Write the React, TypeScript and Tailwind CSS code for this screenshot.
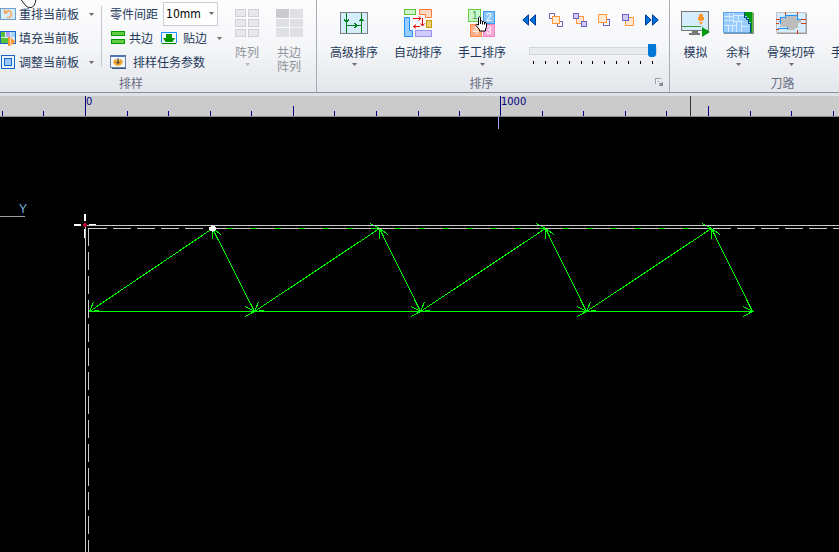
import type { ReactNode } from 'react'

export default function App() {
    return (
        <div className="relative flex min-h-screen flex-col overflow-hidden bg-black font-['Noto_Sans_CJK_SC',sans-serif] text-[12px] text-[#1e395b]">
            <Ribbon />
            <Ruler />
            <NestCanvas />
            <CursorTail className="absolute top-0 left-5" />
        </div>
    )
}

/* ── Ribbon ── */
function Ribbon() {
    return (
        <header className="flex shrink-0 overflow-hidden border-b border-[#8b9097] bg-linear-to-b from-[#fdfdfe] via-[#f5f6f8] to-[#e3e6eb]">
            <Group title="排样" className="-ml-[54px] w-[371px] pl-[54px]" captionClass="-ml-[54px]">
                <div className="w-[101px] pt-[2px]">
                    <RowButton icon={<RedoIcon />} label="重排当前板" menu />
                    <RowButton icon={<FillIcon />} label="填充当前板" />
                    <RowButton icon={<AdjustIcon />} label="调整当前板" menu />
                </div>
                <div className="mt-[6px] h-[61px] w-px bg-[#c3c6cb]" />
                <div className="w-[124px] pt-[2px] pl-2">
                    <div className="flex h-6 items-center gap-[5px]">
                        <label htmlFor="gap" className="whitespace-nowrap">零件间距</label>
                        <div className="relative">
                            <select
                                id="gap"
                                className="block h-6 w-[55px] appearance-none border border-[#c8ccd1] bg-white pl-[2px] font-['DejaVu_Sans_Condensed',sans-serif] text-[12px] text-black"
                            >
                                <option>10mm</option>
                            </select>
                            <Caret className="pointer-events-none absolute top-[10px] right-1" />
                        </div>
                    </div>
                    <div className="flex h-6 items-center">
                        <button className="flex items-center gap-[3px] whitespace-nowrap"><CommonEdgeIcon />共边</button>
                        <button className="ml-2 flex items-center gap-[6px] whitespace-nowrap">
                            <SnapEdgeIcon />贴边<Caret className="ml-1" />
                        </button>
                    </div>
                    <button className="flex h-6 items-center gap-[7px] whitespace-nowrap"><TaskIcon />排样任务参数</button>
                </div>
                <BigButton icon={<ArrayIcon />} label="阵列" menu disabled className="w-[42px]" />
                <BigButton icon={<EdgeArrayIcon />} label="共边阵列" disabled className="w-[42px]" labelClass="w-6" />
            </Group>

            <Group title="排序" className="w-[353px] pl-[5px]" captionClass="pr-7" launcher>
                <BigButton icon={<AdvancedSortIcon />} label="高级排序" menu className="w-16" />
                <BigButton icon={<AutoSortIcon />} label="自动排序" className="w-16" />
                <BigButton icon={<ManualSortIcon />} label="手工排序" menu className="w-16" />
                <div className="ml-[3px] pt-2">
                    <div className="flex">
                        <NavButton name="最前"><RewindIcon /></NavButton>
                        <NavButton name="上一个" className="ml-[3px]"><StepIcon kind="back" /></NavButton>
                        <NavButton name="下一个"><StepIcon kind="forward" /></NavButton>
                        <NavButton name="置前"><StepIcon kind="first" /></NavButton>
                        <NavButton name="置后"><StepIcon kind="last" /></NavButton>
                        <NavButton name="最后"><ForwardIcon /></NavButton>
                    </div>
                    <input
                        type="range"
                        aria-label="排序进度"
                        min={0}
                        max={10}
                        defaultValue={10}
                        className="mt-3 ml-3 block h-[14px] w-32 appearance-none bg-transparent [&::-webkit-slider-runnable-track]:h-2 [&::-webkit-slider-runnable-track]:border [&::-webkit-slider-runnable-track]:border-[#d2d5d9] [&::-webkit-slider-runnable-track]:bg-[#e9ebee] [&::-webkit-slider-thumb]:-mt-1 [&::-webkit-slider-thumb]:h-[13px] [&::-webkit-slider-thumb]:w-2 [&::-webkit-slider-thumb]:appearance-none [&::-webkit-slider-thumb]:rounded-b-[3px] [&::-webkit-slider-thumb]:bg-[#0078d7]"
                    />
                    <div className="mt-[3px] ml-4 flex w-[120px] justify-between">
                        {Array.from({ length: 11 }, (_, i) => (
                            <span key={i} className="h-[3px] w-px bg-black" />
                        ))}
                    </div>
                </div>
            </Group>

            <Group title="刀路" className="w-[222px] pl-1">
                <BigButton icon={<SimulateIcon />} label="模拟" className="w-[43px]" />
                <BigButton icon={<RemnantIcon />} label="余料" menu className="w-[42px]" />
                <BigButton icon={<SkeletonIcon />} label="骨架切碎" menu className="w-16" />
                <BigButton icon={null} label="手" className="ml-2 w-3" />
            </Group>
        </header>
    )
}

type GroupProps = {
    title: string
    children: ReactNode
    className?: string
    captionClass?: string
    launcher?: boolean
}

function Group({ title, children, className = '', captionClass = '', launcher }: GroupProps) {
    return (
        <section className={`shrink-0 border-r border-[#a9adb3] ${className}`}>
            <div className="flex h-[74px]">{children}</div>
            <div className={`relative h-[18px] text-center leading-[18px] text-[#6a6d82] ${captionClass}`}>
                {title}
                {launcher && (
                    <button aria-label="更多" className="absolute top-1 right-[6px]">
                        <svg width="8" height="8" fill="none" stroke="#9aa0aa" shapeRendering="crispEdges">
                            <path d="M0.500 6V0.500H6" />
                            <path d="M3 3.500h1M4 5.500h4M5 6.500h3M4 7.500h4M7.500 4v2" stroke="#858b95" />
                        </svg>
                    </button>
                )}
            </div>
        </section>
    )
}

function RowButton({ icon, label, menu }: { icon: ReactNode; label: string; menu?: boolean }) {
    return (
        <button className="flex h-6 w-full items-center gap-[3px] whitespace-nowrap">
            {icon}
            {label}
            {menu && <Caret className="ml-[7px]" />}
        </button>
    )
}

type BigButtonProps = {
    icon: ReactNode
    label: string
    menu?: boolean
    disabled?: boolean
    className?: string
    labelClass?: string
}

function BigButton({ icon, label, menu, disabled, className = '', labelClass = 'whitespace-nowrap' }: BigButtonProps) {
    return (
        <button disabled={disabled} className={`flex shrink-0 flex-col items-center pt-[9px] disabled:text-[#8f9299] ${className}`}>
            <span className="flex h-7 items-center">{icon}</span>
            <span className={`mt-2 leading-[14px] ${labelClass}`}>{label}</span>
            {menu && <Caret className={disabled ? 'mt-1 opacity-40' : 'mt-1'} />}
        </button>
    )
}

function NavButton({ name, children, className = '' }: { name: string; children: ReactNode; className?: string }) {
    return (
        <button aria-label={name} className={`flex h-6 w-6 items-center justify-center ${className}`}>
            {children}
        </button>
    )
}

function Caret({ className = '' }: { className?: string }) {
    return (
        <svg width="5" height="3" className={`shrink-0 ${className}`} fill="#6b6b6b">
            <path d="M0 0h5L2.500 3z" />
        </svg>
    )
}

/* ── Ruler ── */
const TICKS = [2, 43, 127, 168, 210, 251, 334, 376, 418, 459, 542, 583, 625, 666, 750, 791, 833]

function Ruler() {
    return (
        <div className="shrink-0 border-t-3 border-b border-t-[#dfe3e8] border-b-[#8c8c8c] bg-[#cbcbcb]">
            <svg className="block h-5 w-full" shapeRendering="crispEdges" fill="#000080">
                {TICKS.map((x) => (
                    <rect key={x} x={x} y="15" width="1" height="5" />
                ))}
                <rect x="293" y="10" width="1" height="10" />
                <rect x="708" y="10" width="1" height="10" />
                <rect x="85" y="0" width="1" height="20" />
                <rect x="500" y="0" width="1" height="20" />
                <rect x="690" y="0" width="1" height="20" fill="#303030" />
                <g className="font-['DejaVu_Sans_Condensed',sans-serif] text-[11px]">
                    <text x="86" y="9">0</text>
                    <text x="501" y="9">1000</text>
                </g>
            </svg>
        </div>
    )
}

/* ── Nesting canvas ── */
const TOP = [212, 379, 545, 711]
const BOTTOM = [254, 420, 586, 752]

function NestCanvas() {
    return (
        <svg className="block min-h-[240px] w-full flex-1" shapeRendering="crispEdges" fill="none">
            <rect x="498" y="0" width="1" height="12" fill="#a0a0ff" />
            <text x="19" y="96" fill="#79aede" className="font-['Liberation_Sans',sans-serif] text-[12px]">Y</text>
            <path d="M0 99.500h25" stroke="#a0a0a0" />

            {/* cut path */}
            <g stroke="#00ff00">
                <path d="M212 111.500H711M89 194.500H752" />
                <path d="M89.500 194.500L212.500 111.500L254.500 194.500L379.500 111.500L420.500 194.500L545.500 111.500L586.500 194.500L711.500 111.500L752.500 194.500" />
                {TOP.map((x) => (
                    <path key={x} transform={`translate(${x} 111)`} d="M9 6.500L0.500 0.500L0.500 10.500" />
                ))}
                {TOP.slice(1).map((x) => (
                    <path key={x} transform={`translate(${x} 111)`} d="M-9 -4.500L0.500 0.500L-9 6.500M-7 5.500L0.500 0.500" />
                ))}
                {BOTTOM.map((x) => (
                    <path key={x} transform={`translate(${x} 194)`} d="M-9 -4.500L0.500 0.500L-9 5.500" />
                ))}
                {[89, ...BOTTOM.slice(0, 3)].map((x) => (
                    <path key={x} transform={`translate(${x} 194)`} d="M4.500 -9L0.500 0.500L10.500 -0.500" />
                ))}
            </g>

            {/* sheet border and margin */}
            <g stroke="#c8c8c8">
                <line x1="85" y1="108.500" x2="100%" y2="108.500" />
                <line x1="85.500" y1="108" x2="85.500" y2="100%" />
                <line x1="89" y1="111.500" x2="100%" y2="111.500" strokeDasharray="18 6" />
                <line x1="88.500" y1="111" x2="88.500" y2="100%" strokeDasharray="18 6" />
            </g>

            {/* start point and origin */}
            <path d="M209 110h2v-1h1v-1h1v1h2v1h1v3h-1v1h-2v1h-1v-1h-2v-1h-1z" fill="#fff" />
            <path d="M84 97h2v7h-2zM74 107h7v2h-7zM89 107h7v1h-7zM84 112h1v9h-1z" fill="#fff" />
            <path d="M84 106h2v1h1v2h-1v1h-2v-1h-1v-2h1z" fill="#c00030" />
        </svg>
    )
}

/* ── Small icons ── */
function RedoIcon() {
    return (
        <svg width="16" height="16" className="shrink-0" fill="none">
            <rect x=".5" y="2.500" width="15" height="11" fill="#d4ecfb" stroke="#6f9ec4" />
            <path d="M4.500 3.500v3.500h4M5 6.500Q8 3.500 10.500 5.500Q12.500 9 9.500 11.500H6.500" stroke="#ff9a3c" strokeWidth="1.200" />
        </svg>
    )
}

function FillIcon() {
    return (
        <svg width="16" height="16" className="shrink-0">
            <rect x=".5" y="1.500" width="15" height="12" fill="#d9eefc" stroke="#1a66c4" />
            <path d="M1 2h4v5H1zM1 8h8v5H1z" fill="#5bc236" />
            <path d="M6 2h4v5H6z" fill="#b0a0fa" />
            <path d="M11 2h4v5h-4z" fill="#a8d4f8" />
            <path d="M8 7h2l5.500 4.500L10 16H8z" fill="#ff9630" />
            <path d="M10.500 8v7" stroke="#ffe0b8" />
        </svg>
    )
}

function AdjustIcon() {
    return (
        <svg width="16" height="16" className="shrink-0" shapeRendering="crispEdges">
            <rect x="1.500" y="1.500" width="13" height="13" fill="#eaf4fe" stroke="#1466cc" />
            <rect x="4.500" y="4.500" width="7" height="7" fill="#9cc8fa" stroke="#1466cc" />
        </svg>
    )
}

function CommonEdgeIcon() {
    return (
        <svg width="16" height="16" className="shrink-0" fill="#66cc44" stroke="#009900" shapeRendering="crispEdges">
            <rect x="1.500" y="1.500" width="13" height="4" />
            <rect x="1.500" y="9.500" width="13" height="4" />
        </svg>
    )
}

function SnapEdgeIcon() {
    return (
        <svg width="16" height="14" className="shrink-0">
            <path d="M0.500 12V1.500h15V12" fill="#f4faff" stroke="#1e90ff" />
            <path d="M5 3h6v4h3l-2.500 4h-7L2 7h3z" fill="#009a00" />
            <path d="M1 12.500h14" stroke="#008000" />
        </svg>
    )
}

function TaskIcon() {
    return (
        <svg width="16" height="14" className="shrink-0">
            <rect x=".5" y=".5" width="15" height="12" fill="#f3f6fa" stroke="#6b85a8" />
            <path d="M0 0h16v2H0z" fill="#5179b0" />
            <path d="M3 7l2-3 2 1 1-1 1 1 2-1 2 3-2 3-3 1-3-1z" fill="#eba52a" />
            <path d="M7.500 3h1v5h-1zM6 7h4l-2 2z" fill="#3d3d3d" />
            <path d="M2 13.500h14" stroke="#375681" />
        </svg>
    )
}

/* ── Large icons ── */
function ArrayIcon() {
    return (
        <svg width="24" height="28" fill="#e6e8eb" stroke="#cfd1d5" shapeRendering="crispEdges">
            {[0, 10, 20].map((y) => (
                <g key={y}>
                    <rect x=".5" y={y + 0.5} width="10" height="7" />
                    <rect x="13.500" y={y + 0.5} width="10" height="7" />
                </g>
            ))}
        </svg>
    )
}

function EdgeArrayIcon() {
    return (
        <svg width="27" height="28" fill="#dfe0e3" shapeRendering="crispEdges">
            <path d="M0 0h13v9H0z" fill="#cacbce" />
            <path d="M14 0h13v9H14zM0 10h13v8H0zM14 10h13v8H14zM0 19h13v9H0zM14 19h13v9H14z" />
        </svg>
    )
}

function AdvancedSortIcon() {
    return (
        <svg width="28" height="22" fill="none" shapeRendering="crispEdges">
            <rect x=".5" y=".5" width="27" height="21" fill="#d4ecfb" stroke="#7c8288" />
            <path d="M6.500 1v20M21.500 1v20M6 13.500h16" stroke="#008018" />
            <path d="M4.500 7v1h1v1h2v-1h1V7M19.500 9V8h1V7h2v1h1v1M14 11.500h1v1h1v2h-1v1h-1" stroke="#008018" />
        </svg>
    )
}

function AutoSortIcon() {
    return (
        <svg width="28" height="28" fill="none">
            <rect x=".5" y=".5" width="11" height="5" fill="#ccf5cf" stroke="#5bc236" />
            <path d="M15.500.5h12v8h-6v-3h-6z" fill="#ffd9c2" stroke="#ff7a3c" />
            <path d="M.5 8.500h5v13h3v6h-8z" fill="#99ccff" stroke="#1e90ff" />
            <rect x="22.500" y="11.500" width="5" height="7" fill="#eccf70" stroke="#c49a00" />
            <rect x="11.500" y="21.500" width="16" height="6" fill="#cfccff" stroke="#9a94f0" />
            <path d="M9 9.500h8M14.500 7.500l2.500 2-2.500 2M18.500 9v8M16.500 14.500l2 2.500 2-2.500M16 17.500H9.500M12 15.500l-2.500 2 2.500 2" stroke="#e60000" />
        </svg>
    )
}

function ManualSortIcon() {
    return (
        <span className="relative">
            <svg width="28" height="28" className="font-['Liberation_Sans',sans-serif] text-[10px]" fill="none">
                <rect x="15.500" y="2.500" width="11" height="12" fill="#8cc4f8" stroke="#3a9cf4" />
                <rect x="2.500" y="15.500" width="11" height="12" fill="#ffb184" stroke="#ff8a4c" />
                <rect x="15.500" y="15.500" width="11" height="12" fill="#f6a8d8" stroke="#ee80c0" />
                <rect x=".5" y=".5" width="12" height="12" fill="#ccf7cc" stroke="#66cc44" />
                <text x="4" y="10" fill="#3ca050">1</text>
                <text x="18" y="12" fill="#fff">2</text>
                <text x="5" y="25" fill="#fff">4</text>
                <text x="18" y="25" fill="#fff">3</text>
            </svg>
            <HandCursor className="absolute top-[7px] left-[7px]" />
        </span>
    )
}

function HandCursor({ className }: { className: string }) {
    return (
        <svg width="13" height="16" viewBox="0 0 13 16" className={className}>
            <path
                d="M3.500 9V1.500Q4.500 0 5.500 1.500V5Q6.700 4.200 7.500 5.500Q9 4.800 9.500 6.500Q11.500 6 11.500 8V11L10.500 13V15H4.500V13.500L1 9.500Q1 7.500 3.500 9z"
                fill="#fff"
                stroke="#000"
            />
            <path d="M5.500 5v3M7.500 5.500v3M9.500 6.500v2" stroke="#000" />
        </svg>
    )
}

/* lower end of the pointer, above the ribbon */
function CursorTail({ className }: { className: string }) {
    return (
        <svg width="18" height="9" className={`pointer-events-none ${className}`}>
            <path d="M.5-1L6 6Q8 8 11 7.500Q15 7 16-1z" fill="#fff" stroke="#222" />
        </svg>
    )
}

function RewindIcon() {
    return (
        <svg width="14" height="12" fill="#0070dc" stroke="#003a94">
            <path d="M6.500.8v10.400L.8 6zM13.500.8v10.400L7.800 6z" />
        </svg>
    )
}

function ForwardIcon() {
    return (
        <svg width="14" height="12" fill="#0070dc" stroke="#003a94">
            <path d="M.5.8v10.400L6.200 6zM7.500.8v10.400L13.200 6z" />
        </svg>
    )
}

function StepIcon({ kind }: { kind: 'back' | 'forward' | 'first' | 'last' }) {
    const orange = { fill: '#ffe8cf', stroke: '#ff9a3c' }
    const hollow = { fill: '#fff', stroke: '#6a62c8' }
    const violet = { fill: '#cfccfa', stroke: '#6a62c8' }
    return (
        <svg width="14" height="14" shapeRendering="crispEdges">
            {kind === 'back' && (
                <>
                    <rect x=".5" y=".5" width="5" height="5" {...hollow} />
                    <rect x="8.500" y="8.500" width="5" height="5" {...hollow} />
                    <rect x="3.500" y="3.500" width="7" height="7" {...orange} />
                </>
            )}
            {kind === 'forward' && (
                <>
                    <rect x="3.500" y="3.500" width="7" height="7" {...orange} />
                    <rect x=".5" y=".5" width="5" height="5" {...violet} />
                    <rect x="8.500" y="8.500" width="5" height="5" {...violet} />
                </>
            )}
            {kind === 'first' && (
                <>
                    <rect x="6.500" y="6.500" width="6" height="6" {...hollow} />
                    <rect x="1.500" y="1.500" width="8" height="8" {...orange} />
                </>
            )}
            {kind === 'last' && (
                <>
                    <rect x="4.500" y="4.500" width="8" height="8" {...orange} />
                    <rect x="1.500" y="1.500" width="6" height="6" {...violet} />
                </>
            )}
        </svg>
    )
}

function SimulateIcon() {
    return (
        <svg width="29" height="28" fill="none">
            <rect x=".5" y="2.500" width="27" height="19" fill="#d4ecfb" stroke="#777" />
            <path d="M1 17.500h19" stroke="#3c9c3c" />
            <path d="M18 5h4v3h1v3h-1v1h-4v-1h-1V8h1zM18 13h4l-2 3z" fill="#ff9630" />
            <path d="M11 22h6v2h2v2H8v-2h3z" fill="#777" />
            <path d="M21 18l8 5-8 5z" fill="#009a10" />
        </svg>
    )
}

function RemnantIcon() {
    return (
        <svg width="31" height="22" fill="none" shapeRendering="crispEdges">
            <path d="M1 1h30v21H1z" fill="#8a8f94" />
            <rect x=".5" y=".5" width="29" height="20" fill="#99ccff" stroke="#5aa4ea" />
            <path d="M6.500 1v6M1 4.500h10M10.500 1v10M1 8.500h10M11 3.500h10M15.500 4v5M11 9.500h9M1 13.500h13M13.500 10v10M5.500 14v6M18.500 9v11M18 14.500h7M9.500 14v6" stroke="#d8eeff" />
            <path d="M22 0h8v21h-2V10h-2V6h-2V4h-2z" fill="#009a10" />
            <path d="M21.500 0v5h2v2h2v4h2v10" stroke="#004c80" />
            <path d="M29.500 0v21" stroke="#5bc236" />
        </svg>
    )
}

function SkeletonIcon() {
    return (
        <svg width="31" height="22" fill="none" shapeRendering="crispEdges">
            <path d="M1 1h30v21H1z" fill="#9a9da0" />
            <rect x=".5" y=".5" width="29" height="20" fill="#d4ecfb" stroke="#c4c4c4" />
            <path d="M5 6h5V4h12v3h3v4h-3v5h-3v2H11v-3H4v-3h1z" fill="#bdbdbd" />
            <path d="M2 16.500h9v-2M4.500 12V9.500h-2M4.500 9V5.500h5V3.500h12M21.500 3v4h4" stroke="#1e90ff" />
            <path d="M9.500 0v3M21.500 0v3M0 7.500h4M25 7.500h5M0 11.500h3M25 11.500h5M0 17.500h3M21.500 18v4" stroke="#d63c10" />
        </svg>
    )
}
